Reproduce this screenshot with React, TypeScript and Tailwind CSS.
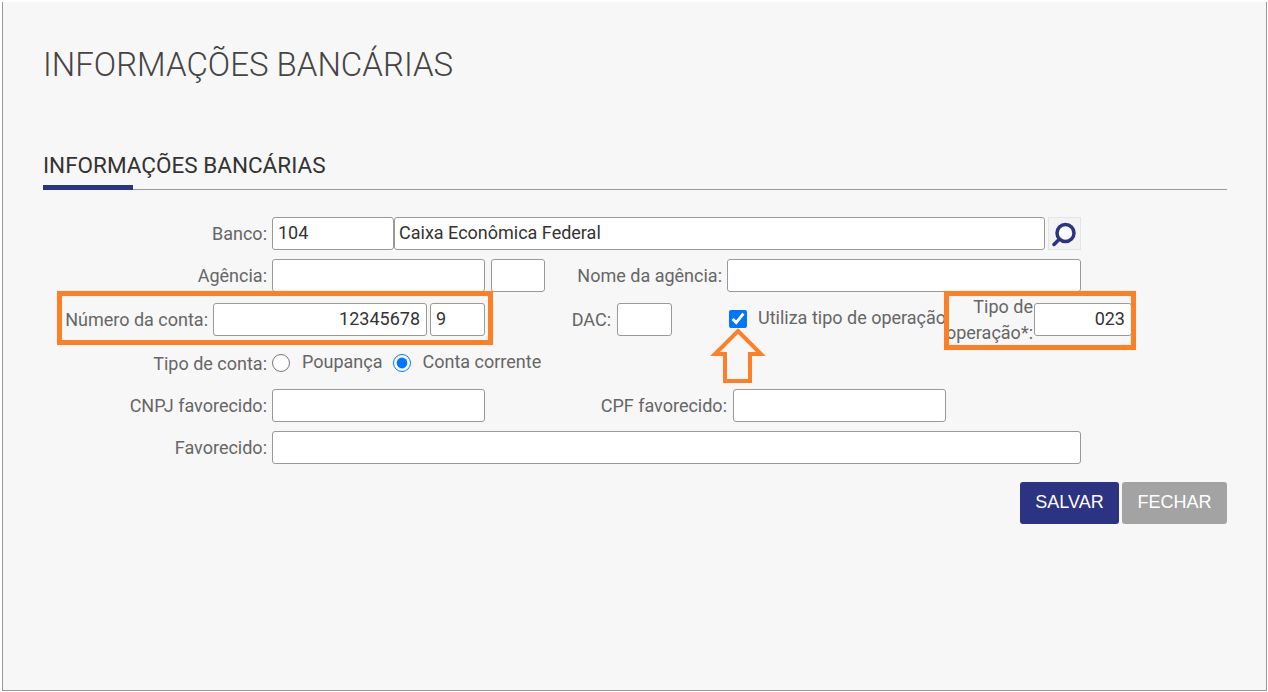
import React from "react";

const roboto = "font-['Roboto',sans-serif]";
const inputBase =
  "h-[33px] shrink-0 rounded-[3px] border border-[#999] bg-white px-[4px] pb-[2px] text-[18px] text-[#333] outline-none font-['Roboto',sans-serif]";

const Label: React.FC<{ className?: string; children: React.ReactNode }> = ({ className, children }) => (
  <label className={`shrink-0 pr-[1px] text-right text-[18px] text-[#666] ${className ?? ""}`}>{children}</label>
);

const App: React.FC = () => {
  return (
    <div className="h-[692px] w-[1268px] overflow-hidden bg-white pl-[2px] pr-[1px] pt-[2px] pb-[1px]">
      <div className={`relative h-[689px] border-x border-b border-[#999] bg-[#f7f7f7] pl-[40px] pr-[39px] ${roboto}`}>
        <h1 className="pt-[43px] text-[33px] font-light leading-[40px] text-[#444]">INFORMAÇÕES BANCÁRIAS</h1>

        <div className="mt-[66px] border-b border-[#999]">
          <h2 className="text-[22.5px] leading-[28px] text-[#333]">INFORMAÇÕES BANCÁRIAS</h2>
          <div className="mt-[6px] -mb-[1px] h-[5px] w-[90px] bg-[#2b3382]" />
        </div>

        <form className="mt-[27px]" onSubmit={(e) => e.preventDefault()}>
          <div className="flex items-center">
            <Label className="w-[225px]">Banco:</Label>
            <input className={`${inputBase} ml-[4px] w-[122px] pl-[5px]`} defaultValue="104" />
            <input className={`${inputBase} w-[651px]`} defaultValue="Caixa Econômica Federal" />
            <button
              type="button"
              className="ml-[3px] flex h-[33px] w-[33px] items-center justify-center border border-[#e4e4e4] bg-[#f3f3f3]"
            >
              <svg width="31" height="31" viewBox="0 0 31 31" fill="none">
                <circle cx="16.5" cy="15" r="8.5" fill="#fbfcfe" stroke="#2b3382" strokeWidth="3.5" />
                <path d="M10 21.5 L5 26.5" stroke="#2b3382" strokeWidth="3.5" strokeLinecap="round" />
              </svg>
            </button>
          </div>

          <div className="mt-[9px] flex items-center">
            <Label className="w-[225px]">Agência:</Label>
            <input className={`${inputBase} ml-[4px] w-[213px]`} />
            <input className={`${inputBase} ml-[6px] w-[54px]`} />
            <Label className="w-[178px]">Nome da agência:</Label>
            <input className={`${inputBase} ml-[4px] w-[354px]`} />
          </div>

          <div className="mt-[1px] flex items-center">
            <Label className="w-[166px]">Número da conta:</Label>
            <input className={`${inputBase} ml-[4px] w-[214px] pr-[6px] text-right`} defaultValue="12345678" />
            <input className={`${inputBase} ml-[3px] w-[55px] pl-[5px]`} defaultValue="9" />
            <Label className="w-[127px]">DAC:</Label>
            <input className={`${inputBase} ml-[5px] w-[55px]`} />
            <input type="checkbox" defaultChecked className="ml-[57px] h-[18px] w-[18px] shrink-0" />
            {/* the text runs on under the orange box, as in the original */}
            <span className="ml-[11px] mb-[4px] w-[185px] shrink-0 whitespace-nowrap text-[18px] text-[#666]">
              Utiliza tipo de operação
            </span>
            <Label className="w-[91px] translate-y-[1px] leading-[26px]">
              <span className="block">Tipo de</span>
              <span className="block whitespace-nowrap">operação*:</span>
            </Label>
            <input className={`${inputBase} w-[98px] pr-[6px] text-right`} defaultValue="023" />
          </div>

          <div className="mt-[6px] flex h-[24px] items-center">
            <Label className="w-[225px]">Tipo de conta:</Label>
            <input type="radio" name="tipo" className="ml-[4px] h-[18px] w-[18px] shrink-0" />
            <span className="ml-[12px] mb-[4px] text-[18px] text-[#666]">Poupança</span>
            <input type="radio" name="tipo" defaultChecked className="ml-[11px] h-[18px] w-[18px] shrink-0" />
            <span className="ml-[11px] mb-[4px] text-[18px] text-[#666]">Conta corrente</span>
          </div>

          <div className="mt-[14px] flex items-center">
            <Label className="w-[225px]">CNPJ favorecido:</Label>
            <input className={`${inputBase} ml-[4px] w-[213px]`} />
            <Label className="w-[243px]">CPF favorecido:</Label>
            <input className={`${inputBase} ml-[5px] w-[213px]`} />
          </div>

          <div className="mt-[9px] flex items-center">
            <Label className="w-[225px]">Favorecido:</Label>
            <input className={`${inputBase} ml-[4px] w-[809px]`} />
          </div>

          <div className="mt-[18px] flex justify-end gap-[3px] font-['Liberation_Sans',sans-serif] text-[18px] text-white">
            <button type="button" className="h-[42px] w-[99px] rounded-[3px] bg-[#2b3382] pb-[2px]">SALVAR</button>
            <button type="button" className="h-[42px] w-[105px] rounded-[3px] bg-[#a3a3a3] pb-[2px]">FECHAR</button>
          </div>
        </form>

        {/* Orange annotations drawn over the form */}
        <div className="absolute left-[54px] top-[289px] h-[54px] w-[436px] border-[5px] border-[#ff7f27]" />
        <div className="absolute left-[941px] top-[289px] h-[59px] w-[192px] border-[5px] border-[#ff7f27]" />
        <svg className="absolute left-[706px] top-[322px]" width="64" height="64" viewBox="0 0 64 64" fill="none">
          <path
            d="M29 7 L52 30 L41 30 L41 57 L16 57 L16 30 L6 30 Z"
            stroke="#ff7f27"
            strokeWidth="4"
            strokeLinejoin="miter"
          />
        </svg>
      </div>
    </div>
  );
};

export default App;
